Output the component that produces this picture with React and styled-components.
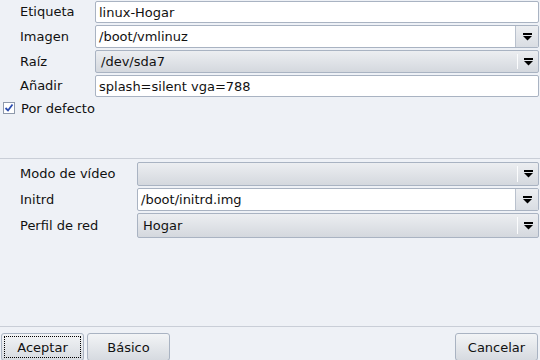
import React from "react";
import styled, { createGlobalStyle, css } from "styled-components";

const Global = createGlobalStyle`
  html, body { margin: 0; padding: 0; }
  body {
    background: #eef1f6;
    font-family: "DejaVu Sans", "Liberation Sans", sans-serif;
    font-size: 13px;
    color: #111;
  }
`;

const Page = styled.div`
  width: 540px;
  height: 360px;
  display: flex;
  flex-direction: column;
  overflow: hidden;
  background: #eef1f6;
`;

const Form = styled.div`
  display: grid;
  grid-template-columns: ${({ labelWidth }) => labelWidth}px 1fr;
  row-gap: 2px;
  padding: ${({ top }) => top}px 1px 0 0;
  align-items: center;
`;

const Label = styled.div`
  padding-left: 20px;
  line-height: 16px;
  white-space: nowrap;
`;

const fieldBox = css`
  box-sizing: border-box;
  height: ${({ h }) => h || 22}px;
  border: 1px solid #a9b3c2;
  border-radius: 2px;
`;

const Input = styled.div`
  ${fieldBox};
  background: #fff;
  padding: 0 3px;
  display: flex;
  align-items: center;
`;

const EditCombo = styled.div`
  ${fieldBox};
  background: #fff;
  display: flex;
  align-items: stretch;
  overflow: hidden;
`;

const EditText = styled.div`
  flex: 1;
  display: flex;
  align-items: center;
  padding: 0 3px;
`;

const ArrowButton = styled.div`
  width: 22px;
  border-left: 1px solid #b9c1cd;
  background: linear-gradient(#eceef1, #d9dde3);
  display: flex;
  align-items: center;
  justify-content: center;
`;

const Combo = styled.div`
  ${fieldBox};
  background: linear-gradient(#eceef1, #d4d8de);
  display: flex;
  align-items: stretch;
`;

const ComboText = styled.div`
  flex: 1;
  display: flex;
  align-items: center;
  padding: 0 5px;
`;

const ComboArrow = styled.div`
  width: 20px;
  margin: 3px 0;
  border-left: 1px solid #fbfcfd;
  display: flex;
  align-items: center;
  justify-content: center;
`;

const CheckRow = styled.label`
  display: flex;
  align-items: center;
  gap: 6px;
  padding: 3px 0 0 3px;
  height: 16px;
`;

const CheckBox = styled.span`
  box-sizing: border-box;
  width: 12px;
  height: 12px;
  background: #fff;
  border: 1px solid #8e99ab;
  display: flex;
  align-items: center;
  justify-content: center;
`;

const Separator = styled.div`
  height: 1px;
  background: #c9ced7;
  margin-top: ${({ top }) => top}px;
`;

const Spacer = styled.div`
  flex: 1;
`;

const ButtonBar = styled.div`
  display: flex;
  align-items: flex-start;
  gap: 3px;
  padding: 6px 2px 0 1px;
  height: 27px;
`;

const Button = styled.div`
  box-sizing: border-box;
  width: 83px;
  height: 28px;
  border: 1px solid #a9b3c2;
  border-radius: 3px;
  background: linear-gradient(#f2f4f6, #d6dae0);
  display: flex;
  align-items: center;
  justify-content: center;
  position: relative;
  margin-left: ${({ push }) => (push ? "auto" : "0")};
  ${({ focused }) =>
    focused &&
    css`
      &::after {
        content: "";
        position: absolute;
        inset: 2px;
        border: 1px dotted #000;
      }
    `}
`;

function DropArrow() {
  return (
    <svg width="11" height="8" viewBox="0 0 11 8">
      <rect x="1" y="0" width="9" height="2" fill="#000" />
      <polygon points="1,3 10,3 5.5,7.5" fill="#000" />
    </svg>
  );
}

function Check() {
  return (
    <svg width="10" height="10" viewBox="0 0 10 10">
      <path d="M1.5 5 L4 7.5 L8.5 1.5" stroke="#2a4cb0" strokeWidth="1.8" fill="none" />
    </svg>
  );
}

export default function App() {
  return (
    <Page>
      <Global />
      <Form labelWidth={95} top={1}>
        <Label>Etiqueta</Label>
        <Input>linux-Hogar</Input>
        <Label>Imagen</Label>
        <EditCombo h={23}>
          <EditText>/boot/vmlinuz</EditText>
          <ArrowButton>
            <DropArrow />
          </ArrowButton>
        </EditCombo>
        <Label>Raíz</Label>
        <Combo h={23}>
          <ComboText>/dev/sda7</ComboText>
          <ComboArrow>
            <DropArrow />
          </ComboArrow>
        </Combo>
        <Label>Añadir</Label>
        <Input>splash=silent vga=788</Input>
      </Form>
      <CheckRow>
        <CheckBox>
          <Check />
        </CheckBox>
        Por defecto
      </CheckRow>
      <Separator top={42} />
      <Form labelWidth={137} top={3}>
        <Label>Modo de vídeo</Label>
        <Combo h={24}>
          <ComboText />
          <ComboArrow>
            <DropArrow />
          </ComboArrow>
        </Combo>
        <Label>Initrd</Label>
        <EditCombo h={23}>
          <EditText>/boot/initrd.img</EditText>
          <ArrowButton>
            <DropArrow />
          </ArrowButton>
        </EditCombo>
        <Label>Perfil de red</Label>
        <Combo h={25}>
          <ComboText>Hogar</ComboText>
          <ComboArrow>
            <DropArrow />
          </ComboArrow>
        </Combo>
      </Form>
      <Spacer />
      <Separator top={0} />
      <ButtonBar>
        <Button focused>Aceptar</Button>
        <Button>Básico</Button>
        <Button push>Cancelar</Button>
      </ButtonBar>
    </Page>
  );
}
